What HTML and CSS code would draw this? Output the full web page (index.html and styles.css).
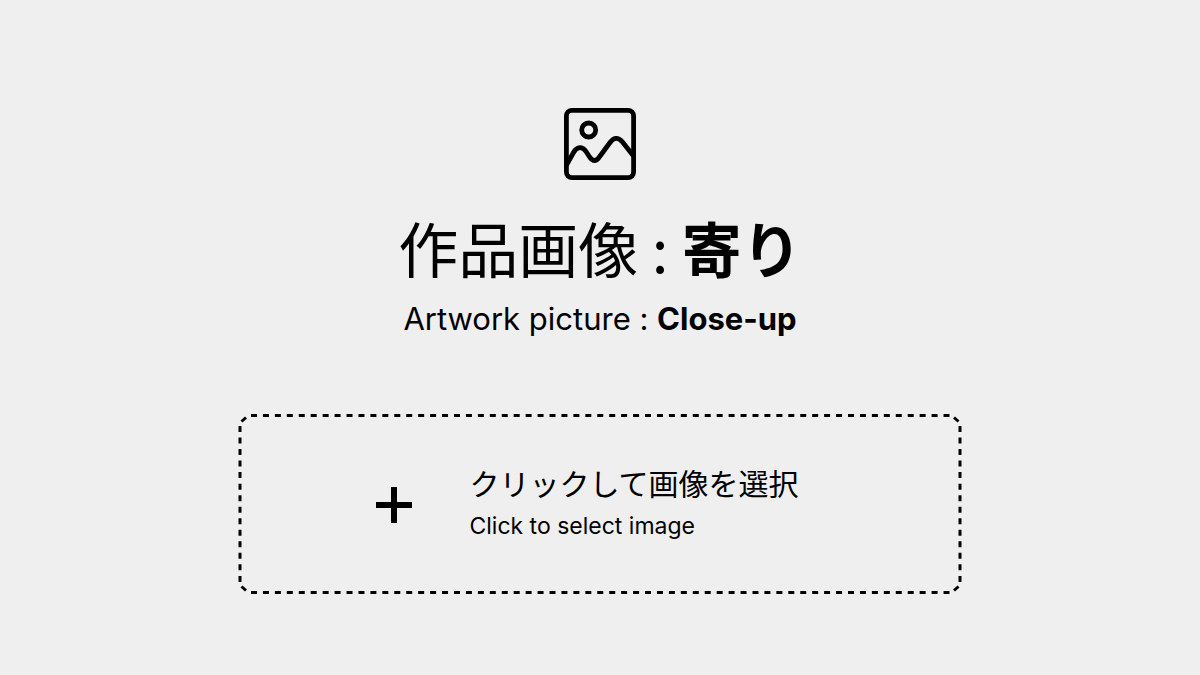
FILE: index.html
```html
<!DOCTYPE html>
<html lang="ja">
<head>
<meta charset="utf-8">
<meta name="viewport" content="width=device-width, initial-scale=1">
<title>作品画像 : 寄り</title>
<link rel="stylesheet" href="styles.css">
</head>
<body>
<main class="upload">
  <svg class="picture-icon" viewBox="0 0 72 72" fill="none" stroke="currentColor" stroke-width="4.8" aria-hidden="true">
    <rect x="2.4" y="2.4" width="67.2" height="67.2" rx="5.5"/>
    <circle cx="24.7" cy="22" r="7"/>
    <path d="M2.5 57L9.500 44.500C13 38.300 18.500 38.300 22 43.500L26 49.500C29 53.500 32 53.500 35 49.500L46 34.500C50 29 54.500 29 58.500 34L69.500 48"/>
  </svg>
  <h1 class="title">作品画像 : <strong>寄り</strong></h1>
  <p class="subtitle" lang="en">Artwork picture : <strong>Close-up</strong></p>
  <button class="picker" type="button">
    <svg class="outline" viewBox="0 0 724 180" preserveAspectRatio="none" fill="none" stroke="currentColor" stroke-width="3" aria-hidden="true">
      <path stroke-dasharray="6 5.94" d="M13 1.500H711.500M13 178.500H711.500"/>
      <path stroke-dasharray="6 5.53" d="M2 12V168M722 12V168"/>
      <path d="M3.500 7.500L8 3.500M720.500 7.500L716 3.500M3.500 172.500L8 176.500M720.500 172.500L716 176.500"/>
    </svg>
    <svg class="plus-icon" viewBox="0 0 36 36" stroke="currentColor" stroke-width="6" aria-hidden="true">
      <path d="M18 0V36M0 18H36"/>
    </svg>
    <span class="picker-text">
      <span class="picker-ja">クリックして画像を選択</span>
      <span class="picker-en" lang="en">Click to select image</span>
    </span>
  </button>
</main>
</body>
</html>
```
FILE: styles.css
```css
* {
  box-sizing: border-box;
}

body {
  margin: 0;
  background: #efefef;
  color: #000;
  font-family: Inter, "Noto Sans CJK JP", sans-serif;
}

.upload {
  display: flex;
  flex-direction: column;
  align-items: center;
  padding: 108px 24px 80px;
}

.picture-icon {
  width: 72px;
  height: 72px;
}

.title {
  margin: 28px 0 0;
  font-family: "Noto Sans CJK JP", sans-serif;
  font-size: 60px;
  font-weight: 400;
  line-height: 78px;
}

.subtitle {
  margin: 13px 0 0;
  font-size: 31px;
  line-height: 40px;
}

.title strong,
.subtitle strong {
  font-weight: 700;
}

.picker {
  position: relative;
  display: flex;
  justify-content: center;
  align-items: center;
  gap: 57px;
  width: 100%;
  max-width: 724px;
  margin-top: 75px;
  padding: 49px 49px 47px 24px;
  border: 0;
  background: none;
  color: inherit;
  font-family: inherit;
  text-align: left;
  cursor: pointer;
}

.outline {
  position: absolute;
  inset: 0;
  width: 100%;
  height: 100%;
}

.plus-icon {
  flex: none;
  width: 36px;
  height: 36px;
}

.picker-text {
  display: grid;
}

.picker-ja {
  font-size: 30px;
  line-height: 42px;
}

.picker-en {
  font-size: 23px;
  line-height: 42px;
}
```
